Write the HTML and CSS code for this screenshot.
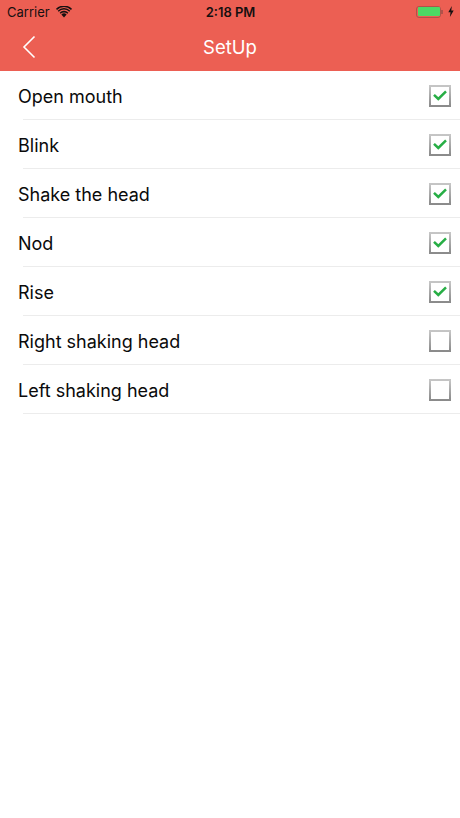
FILE: index.html
```html
<!DOCTYPE html>
<html lang="en">
<head>
<meta charset="utf-8">
<title>SetUp</title>
<link rel="stylesheet" href="styles.css">
</head>
<body>
<header class="top">
  <div class="status">
    <div class="status-left">
      <span class="carrier">Carrier</span>
      <svg class="wifi" viewBox="0 0 16 12" width="16" height="12"><path d="M8 11.500 5.400 8.600a3.600 3.600 0 0 1 5.200 0Z" fill="#161010"/><path d="M3.600 6.700a6.200 6.200 0 0 1 8.800 0l-1 1.100a4.800 4.800 0 0 0-6.800 0Z" fill="#161010"/><path d="M1.700 4.700a8.900 8.900 0 0 1 12.600 0l-1 1.100a7.500 7.500 0 0 0-10.600 0Z" fill="#161010"/><path d="M0 2.800a11.400 11.400 0 0 1 16 0l-1 1.100A10 10 0 0 0 1 3.900Z" fill="#161010"/></svg>
    </div>
    <span class="time">2:18 PM</span>
    <div class="status-right">
      <span class="battery"><span class="battery-fill"></span></span>
      <span class="battery-tip"></span>
      <svg class="bolt" viewBox="0 0 6 11" width="6" height="11"><path d="M3.800 0 .3 6.200h2.200L1.900 11l3.800-6.600H3.300Z" fill="#161010"/></svg>
    </div>
  </div>
  <div class="nav">
    <svg class="back" viewBox="0 0 14 24" width="14" height="24"><path d="M12.500 1.500 2 12l10.500 10.500" fill="none" stroke="#fff" stroke-width="1.600"/></svg>
    <span class="title">SetUp</span>
  </div>
</header>
<ul class="list">
  <li class="row"><span class="label">Open mouth</span><span class="box"><svg class="tick" viewBox="0 0 14 11" width="14" height="11"><path d="M1 4.800 5.300 9 13 1.400" fill="none" stroke="#27ae45" stroke-width="2.500"/></svg></span></li>
  <li class="row"><span class="label">Blink</span><span class="box"><svg class="tick" viewBox="0 0 14 11" width="14" height="11"><path d="M1 4.800 5.300 9 13 1.400" fill="none" stroke="#27ae45" stroke-width="2.500"/></svg></span></li>
  <li class="row"><span class="label">Shake the head</span><span class="box"><svg class="tick" viewBox="0 0 14 11" width="14" height="11"><path d="M1 4.800 5.300 9 13 1.400" fill="none" stroke="#27ae45" stroke-width="2.500"/></svg></span></li>
  <li class="row"><span class="label">Nod</span><span class="box"><svg class="tick" viewBox="0 0 14 11" width="14" height="11"><path d="M1 4.800 5.300 9 13 1.400" fill="none" stroke="#27ae45" stroke-width="2.500"/></svg></span></li>
  <li class="row"><span class="label">Rise</span><span class="box"><svg class="tick" viewBox="0 0 14 11" width="14" height="11"><path d="M1 4.800 5.300 9 13 1.400" fill="none" stroke="#27ae45" stroke-width="2.500"/></svg></span></li>
  <li class="row"><span class="label">Right shaking head</span><span class="box"></span></li>
  <li class="row"><span class="label">Left shaking head</span><span class="box"></span></li>
</ul>
</body>
</html>
```
FILE: styles.css
```css
* { box-sizing: border-box; }
html, body { margin: 0; padding: 0; }
body {
  width: 460px;
  height: 818px;
  background: #fff;
  font-family: "Inter", "Liberation Sans", sans-serif;
  overflow: hidden;
}
.top {
  height: 71px;
  background: #ec5f53;
  display: flex;
  flex-direction: column;
}
.status {
  height: 24px;
  padding: 0 6px 0 7px;
  display: grid;
  grid-template-columns: 1fr auto 1fr;
  align-items: center;
  color: #161010;
  font-size: 13px;
}
.status-left { display: flex; align-items: center; gap: 6px; }
.time { font-weight: 600; font-size: 13px; }
.status-right {
  display: flex;
  align-items: center;
  justify-content: flex-end;
  padding-bottom: 1px;
}
.battery {
  width: 25px;
  height: 12px;
  border: 1.500px solid #b0524a;
  border-radius: 3px;
  padding: 0.500px;
  display: flex;
}
.battery-fill { flex: 1; background: #4cd964; border-radius: 1px; }
.battery-tip { width: 1.500px; height: 4px; background: #b0524a; margin-right: 5.500px; }
.nav {
  flex: 1;
  position: relative;
  display: flex;
  align-items: center;
  justify-content: center;
  padding-bottom: 2px;
}
.back { position: absolute; left: 22px; top: 11px; }
.title { color: #fff; font-size: 18.500px; }
.list { list-style: none; margin: 0; padding: 0; }
.row {
  height: 49px;
  padding: 0 9px 0 18px;
  display: flex;
  align-items: center;
  justify-content: space-between;
  font-size: 18px;
  color: #0a0a0a;
  position: relative;
}
.row::after {
  content: "";
  position: absolute;
  left: 23px;
  right: 0;
  bottom: 0;
  height: 1px;
  background: #ececec;
}
.label { padding-top: 2px; }
.box {
  width: 22px;
  height: 22px;
  border: 2px solid;
  border-image: linear-gradient(#c6c6c6, #8a8a8a) 1;
  display: flex;
  align-items: center;
  justify-content: center;
  background: #fff;
}
```
